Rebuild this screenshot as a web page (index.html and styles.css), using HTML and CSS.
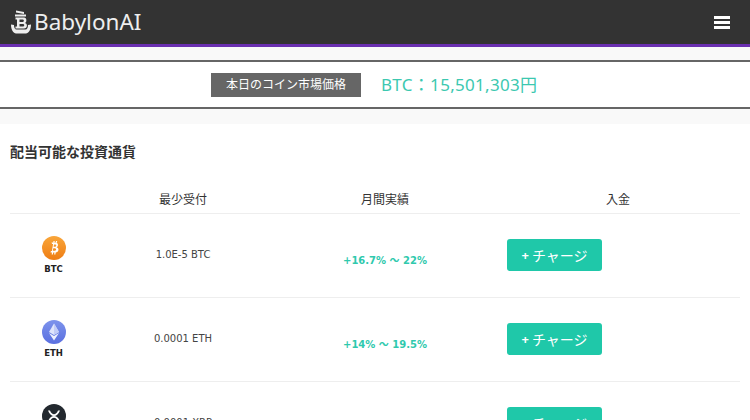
FILE: index.html
```html
<!doctype html>
<html lang="ja">
  <head>
    <meta charset="UTF-8" />
    <title>BabylonAI</title>
    <link rel="stylesheet" href="styles.css">
  </head>
  <body>
    <header class="topbar">
      <a class="logo" href="#">
        <svg class="logo-icon" width="20" height="24" viewBox="0 0 20 24">
          <path d="M5 .5l8 1.500v2L5 2.500z" fill="#eee"/>
          <path d="M4 4.500h11v2H4z" fill="#eee"/>
          <path d="M4.500 7.500h8.500c3 0 3 5 1 5.500 2.800 .5 2.600 5.500-1 5.500H4.500v-2h1.500v-7H4.500zM8.500 9.500v2.500h3.500c1.200 0 1.200-2.500 0-2.500zM8.500 14v2.500h3.800c1.300 0 1.300-2.500 0-2.500z" fill="#eee" fill-rule="evenodd"/>
          <path d="M0 14.500l3 .5c0 2.800 1 4.500 2.500 4.500h9c1.500 0 2.500-1.700 2.500-4.500l3-.5c0 5.500-2.500 9-5 9H5c-2.500 0-5-3.500-5-9z" fill="#eee"/>
        </svg>
        <span>BabylonAI</span>
      </a>
      <button class="menu-btn" aria-label="menu"><span></span><span></span><span></span></button>
    </header>

    <div class="gap-top"></div>

    <section class="price-bar">
      <span class="price-label">本日のコイン市場価格</span>
      <span class="price-value">BTC：15,501,303円</span>
    </section>

    <div class="gap-bottom"></div>

    <main class="content">
      <h2>配当可能な投資通貨</h2>
      <div class="coin-head">
        <div></div>
        <div>最少受付</div>
        <div>月間実績</div>
        <div>入金</div>
      </div>

      <div class="coin-row">
        <div class="coin">
          <svg width="24" height="24" viewBox="0 0 24 24">
            <defs>
              <linearGradient id="btcGrad" x1="0" y1="0" x2="0" y2="1">
                <stop offset="0" stop-color="#f9a63a"/>
                <stop offset="1" stop-color="#ee7d14"/>
              </linearGradient>
            </defs>
            <circle cx="12" cy="12" r="12" fill="url(#btcGrad)"/>
            <path d="M9.500 6.500h4c3 0 3.300 4 1 4.800 3 .6 2.600 5.200-1 5.200h-5l.4-1.600h1l1.200-6.800h-1zM12 8.500l-.4 2.200h1.700c1.300 0 1.400-2.200 0-2.200zM11.300 12.300l-.5 2.500h2.200c1.500 0 1.600-2.500 0-2.500z" fill="#fff" fill-rule="evenodd"/>
            <path d="M11.500 5h1.200l-.3 1.800h-1.200zM14 5h1.200l-.3 1.800h-1.200zM10 16h1.200l-.3 2.500H9.700zM12.500 16h1.200l-.3 2.500h-1.200z" fill="#fff"/>
          </svg>
          <span>BTC</span>
        </div>
        <div class="minimum">1.0E-5 BTC</div>
        <div class="monthly">+16.7% ～ 22%</div>
        <div class="deposit"><a class="charge-btn" href="#"><b>+</b>チャージ</a></div>
      </div>

      <div class="coin-row">
        <div class="coin">
          <svg width="24" height="24" viewBox="0 0 24 24">
            <defs>
              <linearGradient id="ethGrad" x1="0" y1="0" x2="0" y2="1">
                <stop offset="0" stop-color="#7d93ec"/>
                <stop offset="1" stop-color="#5a6fe0"/>
              </linearGradient>
            </defs>
            <circle cx="12" cy="12" r="12" fill="url(#ethGrad)"/>
            <path d="M12 3.500l5 8.500-5 3-5-3z" fill="#dfe5fb"/>
            <path d="M12 3.500l5 8.500-5 3z" fill="#c3cdf7"/>
            <path d="M7 13l5 3 5-3-5 7.500z" fill="#eef1fd"/>
          </svg>
          <span>ETH</span>
        </div>
        <div class="minimum">0.0001 ETH</div>
        <div class="monthly">+14% ～ 19.5%</div>
        <div class="deposit"><a class="charge-btn" href="#"><b>+</b>チャージ</a></div>
      </div>

      <div class="coin-row">
        <div class="coin">
          <svg width="24" height="24" viewBox="0 0 24 24">
            <circle cx="12" cy="12" r="12" fill="#23292f"/>
            <path d="M6 6.500h2c1 2.500 2.500 3.800 4 3.800s3-1.300 4-3.800h2c-1.200 3.500-3.500 5.500-6 5.500s-4.800-2-6-5.500zM6 17.500h2c1-2.500 2.500-3.800 4-3.800s3 1.300 4 3.800h2c-1.200-3.500-3.500-5.500-6-5.500s-4.800 2-6 5.500z" fill="#fff"/>
          </svg>
          <span>XRP</span>
        </div>
        <div class="minimum">0.0001 XRP</div>
        <div class="monthly">+14% ～ 19.5%</div>
        <div class="deposit"><a class="charge-btn" href="#"><b>+</b>チャージ</a></div>
      </div>
    </main>
  </body>
</html>
```

FILE: styles.css
```css
* {
  box-sizing: border-box;
  margin: 0;
  padding: 0;
}
html,
body {
  height: 420px;
  overflow: hidden;
}
body {
  font-family: "Noto Sans", "Noto Sans CJK JP", sans-serif;
  background-color: #fff;
  color: #333;
}
a {
  text-decoration: none;
}

/* Top bar */
.topbar {
  height: 47px;
  background-color: #333;
  border-bottom: 3px solid #6a2fb0;
  display: flex;
  justify-content: space-between;
  align-items: center;
  padding: 0 20px 0 11px;
}
.logo {
  display: flex;
  align-items: center;
  gap: 3px;
  color: #eee;
  font-size: 22.500px;
  line-height: 1;
}
.menu-btn {
  width: 16px;
  background: none;
  border: none;
  display: flex;
  flex-direction: column;
  gap: 2px;
}
.menu-btn span {
  display: block;
  height: 3px;
  background-color: #fff;
}

/* Price strip */
.gap-top {
  height: 13px;
  background-color: #f9f9f9;
}
.gap-bottom {
  height: 15px;
  background-color: #f9f9f9;
}
.price-bar {
  height: 49px;
  border-top: 2px solid #666;
  border-bottom: 2px solid #666;
  background-color: #fff;
  display: flex;
  align-items: center;
  padding-left: 211px;
  gap: 20px;
}
.price-label {
  width: 150px;
  height: 24px;
  margin-top: 1px;
  line-height: 24px;
  text-align: center;
  background-color: #666;
  color: #fff;
  font-size: 12px;
}
.price-value {
  color: #3cc8b0;
  font-size: 17px;
  letter-spacing: 0.3px;
  margin-top: -2px;
}

/* Coin table */
.content {
  padding: 0 10px;
}
.content h2 {
  font-size: 14px;
  font-weight: bold;
  line-height: 18px;
  padding-top: 19px;
}
.coin-head,
.coin-row {
  display: grid;
  grid-template-columns: 86px 174px 230px 240px;
  border-bottom: 1px solid #eee;
}
.coin-head {
  margin-top: 23px;
  height: 30px;
  align-items: center;
  text-align: center;
  font-size: 12px;
}
.coin-head div:last-child {
  padding-right: 4px;
}
.coin-row {
  height: 84px;
  align-items: center;
  text-align: center;
}
.coin {
  display: flex;
  flex-direction: column;
  align-items: center;
  gap: 3px;
  padding-left: 1px;
  font-family: "DejaVu Sans", sans-serif;
  font-size: 8.500px;
  font-weight: bold;
  line-height: 12px;
  color: #222;
}
.minimum {
  font-family: "DejaVu Sans", sans-serif;
  font-size: 10px;
  color: #444;
  padding-bottom: 3px;
}
.monthly {
  font-family: "DejaVu Sans", "Noto Sans CJK JP", sans-serif;
  font-size: 10px;
  font-weight: bold;
  color: #2fc9ad;
  padding-top: 8px;
}
.deposit {
  padding-left: 7px;
  text-align: left;
  padding-bottom: 2px;
}
.charge-btn {
  display: flex;
  justify-content: center;
  align-items: center;
  gap: 3px;
  width: 95px;
  height: 32px;
  border-radius: 3px;
  background-color: #1fc8a9;
  color: #fff;
  font-size: 14px;
}
.charge-btn b {
  font-size: 13px;
}
```
